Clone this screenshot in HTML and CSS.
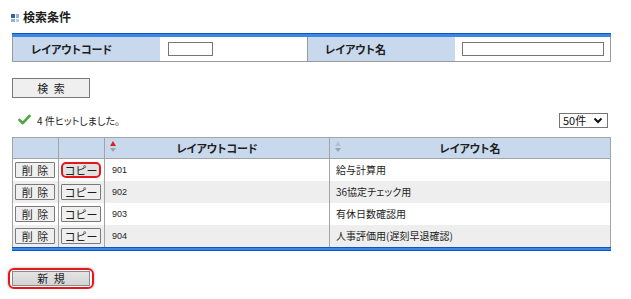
FILE: index.html
```html
<!DOCTYPE html>
<html lang="ja">
<head>
<meta charset="utf-8">
<link rel="stylesheet" href="styles.css">
</head>
<body>
<div class="page">
  <h2 class="title"><span class="title-icon"><i class="q1"></i><i class="q2"></i><i class="q3"></i><i class="q4"></i></span>検索条件</h2>

  <table class="cond">
    <tr>
      <th class="c1">レイアウトコード</th>
      <td class="c2"><span class="inp inp-s"></span></td>
      <th class="c3">レイアウト名</th>
      <td class="c4"><span class="inp inp-l"></span></td>
    </tr>
  </table>

  <div class="btn-row"><button class="btn btn-search">検 索</button></div>

  <div class="hit-row">
    <div class="hit">
      <svg class="check" width="13" height="11" viewBox="0 0 13 11"><path d="M1.5 6 L4.8 9.2 L11.5 1.8" fill="none" stroke="#4aaa3c" stroke-width="2.6" stroke-linecap="round" stroke-linejoin="round"/></svg>
      <span>4 件ヒットしました。</span>
    </div>
    <div class="sel">50件 <svg width="10" height="7" viewBox="0 0 10 7"><path d="M1.5 1.5 L5 5 L8.5 1.5" fill="none" stroke="#111" stroke-width="2"/></svg></div>
  </div>

  <table class="list">
    <thead>
      <tr>
        <th class="w1"></th>
        <th class="w2"></th>
        <th class="w3"><span class="sort"><i class="up red"></i><i class="dn"></i></span>レイアウトコード</th>
        <th class="w4"><span class="sort"><i class="up"></i><i class="dn"></i></span>レイアウト名</th>
      </tr>
    </thead>
    <tbody>
      <tr>
        <td class="bc"><button class="sbtn">削 除</button></td>
        <td class="bc"><button class="sbtn hl">コピー</button></td>
        <td class="num">901</td>
        <td class="nm">給与計算用</td>
      </tr>
      <tr class="alt">
        <td class="bc"><button class="sbtn">削 除</button></td>
        <td class="bc"><button class="sbtn">コピー</button></td>
        <td class="num">902</td>
        <td class="nm">36協定チェック用</td>
      </tr>
      <tr>
        <td class="bc"><button class="sbtn">削 除</button></td>
        <td class="bc"><button class="sbtn">コピー</button></td>
        <td class="num">903</td>
        <td class="nm">有休日数確認用</td>
      </tr>
      <tr class="alt">
        <td class="bc"><button class="sbtn">削 除</button></td>
        <td class="bc"><button class="sbtn">コピー</button></td>
        <td class="num">904</td>
        <td class="nm">人事評価用(遅刻早退確認)</td>
      </tr>
    </tbody>
  </table>
  <div class="list-bottom"></div>

  <div class="new-row"><span class="ring"><button class="btn btn-new">新 規</button></span></div>
</div>
</body>
</html>
```

FILE: styles.css
```css
* { box-sizing: border-box; }
html, body { margin: 0; padding: 0; background: #fff; }
body {
  font-family: "Noto Sans CJK JP", "Liberation Sans", sans-serif;
  font-feature-settings: "palt";
  color: #1e1e1e;
  font-size: 11px;
  width: 631px;
}
.page { padding: 9px 20px 0 12px; }

.title {
  display: flex;
  align-items: center;
  margin: 0 0 9px -1px;
  font-size: 12px;
  font-weight: bold;
  height: 16px;
  line-height: 16px;
  color: #1e1e1e;
}
.title-icon {
  display: grid;
  grid-template-columns: 4px 3px;
  grid-template-rows: 4px 3px;
  gap: 1px;
  margin-right: 4px;
  margin-top: 1px;
}
.title-icon i { display: block; }
.q1 { background: #2f66b3; }
.q2 { background: #8fb3dc; }
.q3 { background: #8fb3dc; }
.q4 { background: #b9cfe8; }

.cond {
  width: 599px;
  border-collapse: collapse;
  border-top: 3px solid #3d86e3;
  box-shadow: 0 -1px 0 #0a55c8;
  margin-top: 1px;
}
.cond th, .cond td {
  height: 26px;
  padding: 0;
  border-bottom: 1px solid #9a9a9a;
  vertical-align: middle;
}
.cond th {
  background: #c8d9ee;
  text-align: left;
  font-weight: bold;
  font-size: 11px;
  color: #1e1e1e;
}
.cond .c1 { width: 147px; padding-left: 18px; border-left: 1px solid #9a9a9a; }
.cond .c2 { width: 148px; padding-left: 8px; border-right: 1px solid #9a9a9a; }
.cond .c3 { width: 147px; padding-left: 17px; }
.cond .c4 { padding-left: 7px; border-right: 1px solid #9a9a9a; }
.inp {
  display: block;
  height: 14px;
  border: 1px solid #767676;
  background: #fff;
}
.inp-s { width: 45px; }
.inp-l { width: 142px; }

.btn-row { padding-top: 16px; }
.btn {
  font-family: "Noto Sans CJK JP", sans-serif;
  font-size: 11px;
  color: #1e1e1e;
  padding: 0;
  margin: 0;
  display: block;
  width: 78px;
  height: 20px;
  border: 1px solid #7a7a7a;
  background: #efefef;
  line-height: 17px;
  word-spacing: 3px;
}

.hit-row {
  display: flex;
  justify-content: space-between;
  align-items: center;
  margin-top: 15px;
  padding-right: 3px;
  height: 15px;
}
.hit {
  display: flex;
  align-items: center;
  padding-left: 6px;
  font-size: 10px;
  gap: 6px;
}
.check { display: block; margin-top: -2px; }
.sel {
  width: 49px;
  height: 15px;
  border: 1px solid #767676;
  font-size: 11px;
  line-height: 13px;
  padding-left: 3px;
  display: flex;
  align-items: center;
  justify-content: space-between;
  padding-right: 4px;
  color: #111;
}
.sel svg { display: block; }

.list {
  margin-top: 9px;
  width: 599px;
  border-collapse: collapse;
}
.list th {
  height: 21px;
  background: #c8d9ee;
  border: 1px solid #a4a4a4;
  font-weight: bold;
  font-size: 11px;
  padding: 0;
  position: relative;
  color: #1e1e1e;
}
.list .w1 { width: 46px; }
.list .w2 { width: 46px; }
.list .w3 { width: 225px; }
.sort {
  position: absolute;
  left: 5px;
  top: 3px;
  display: flex;
  flex-direction: column;
  align-items: center;
  gap: 2px;
}
.sort i {
  display: block;
  width: 0;
  height: 0;
  border-left: 3px solid transparent;
  border-right: 3px solid transparent;
}
.sort .up { border-bottom: 5px solid #b8c0cc; }
.sort .up.red { border-bottom-color: #e0201a; }
.sort .dn { border-top: 4px solid #9aa4b0; }

.list td {
  height: 22px;
  padding: 0;
  border-left: 1px solid #a4a4a4;
  border-right: 1px solid #a4a4a4;
  vertical-align: middle;
  font-size: 10px;
}
.list tr.alt td { background: #eeeeee; }
.list td.bc { padding-left: 2px; }
.list td.num { padding-left: 7px; font-family: "Liberation Sans", sans-serif; font-size: 9px; }
.list td.nm { padding-left: 6px; }
.sbtn {
  display: block;
  width: 40px;
  height: 16px;
  padding: 0;
  margin: 0;
  border: 1px solid #7a7a7a;
  background: #efefef;
  font-family: "Noto Sans CJK JP", sans-serif;
  font-size: 11px;
  line-height: 14px;
  color: #1e1e1e;
  border-radius: 1px;
  word-spacing: 2px;
}
.sbtn.hl {
  border: 2px solid #e8151b;
  border-radius: 5px;
  background: #e2e2e2;
  line-height: 12px;
}
.list-bottom {
  width: 599px;
  height: 4px;
  background: #3d86e3;
  border-top: 1px solid #0a55c8;
  border-bottom: 1px solid #0a55c8;
}

.new-row { padding-top: 17px; margin-left: -4px; }
.ring {
  display: inline-block;
  padding: 1px 2px;
  border: 2px solid #e8151b;
  border-radius: 6px;
  box-shadow: 0 0 3px rgba(0,0,0,0.35);
}
.btn-new {
  height: 15px;
  line-height: 13px;
  background: linear-gradient(#e4e4e4, #d4d4d4);
  border: 1px solid #8a8a8a;
}
```
